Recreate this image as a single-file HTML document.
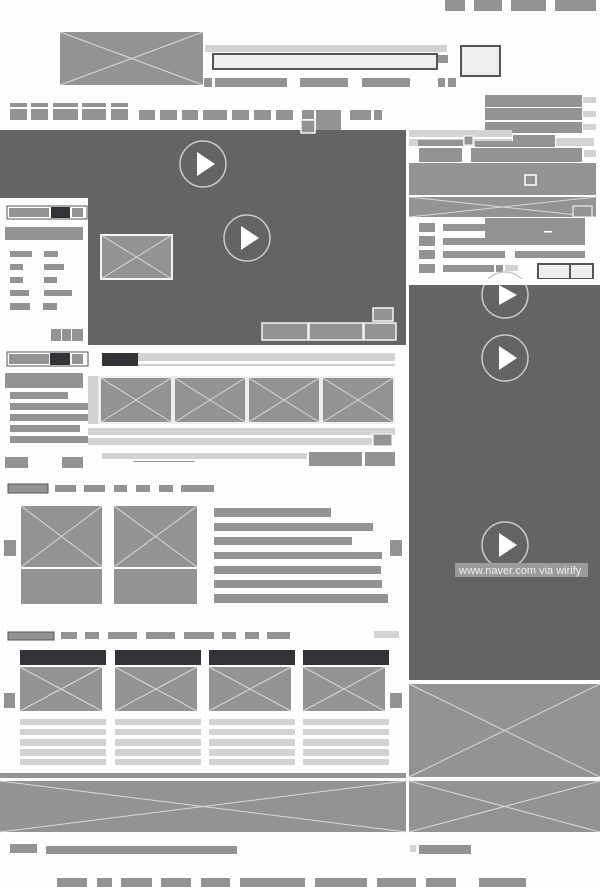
<!DOCTYPE html>
<html><head><meta charset="utf-8"><style>
html,body{margin:0;padding:0;background:#fdfdfd;width:600px;height:887px;overflow:hidden}
svg{display:block}
.g{fill:#939393}.d{fill:#646464}.l{fill:#d2d2d2}.k{fill:#343236}
.x{stroke:#d8d8d8;stroke-width:1;fill:none}
.w{fill:none;stroke:#f4f4f4;stroke-width:2}
</style></head><body>
<svg width="600" height="887" viewBox="0 0 600 887" xmlns="http://www.w3.org/2000/svg">
<!-- top nav -->
<rect class="g" x="445" y="0" width="20" height="11"/><rect class="g" x="474" y="0" width="28" height="11"/><rect class="g" x="511" y="0" width="35" height="11"/><rect class="g" x="555" y="0" width="41" height="11"/>
<!-- logo -->
<rect class="g" x="60" y="32" width="143" height="53"/><path class="x" d="M60 32L203 85M203 32L60 85"/>
<!-- search -->
<rect class="l" x="205" y="45" width="242" height="7"/>
<rect x="213" y="54" width="224" height="15" fill="#eee" stroke="#555" stroke-width="2"/>
<rect class="g" x="438" y="55" width="10" height="8"/>
<rect x="461" y="46" width="39" height="30" fill="#eee" stroke="#555" stroke-width="2"/>
<rect class="g" x="204" y="78" width="8" height="9"/><rect class="g" x="215" y="78" width="72" height="9"/><rect class="g" x="300" y="78" width="48" height="9"/><rect class="g" x="362" y="78" width="48" height="9"/><rect class="g" x="438" y="78" width="7" height="9"/><rect class="g" x="448" y="78" width="8" height="9"/>
<!-- nav row -->
<g class="g"><rect x="10" y="103" width="17" height="4"/><rect x="31" y="103" width="17" height="4"/><rect x="53" y="103" width="25" height="4"/><rect x="82" y="103" width="24" height="4"/><rect x="111" y="103" width="17" height="4"/>
<rect x="10" y="109" width="17" height="11"/><rect x="31" y="109" width="17" height="11"/><rect x="53" y="109" width="25" height="11"/><rect x="82" y="109" width="24" height="11"/><rect x="111" y="109" width="17" height="11"/>
<rect x="139" y="110" width="16" height="10"/><rect x="160" y="110" width="17" height="10"/><rect x="182" y="110" width="16" height="10"/><rect x="203" y="110" width="24" height="10"/><rect x="232" y="110" width="17" height="10"/><rect x="254" y="110" width="17" height="10"/><rect x="276" y="110" width="17" height="10"/>
<rect x="302" y="110" width="12" height="9"/><rect x="316" y="110" width="25" height="20"/><rect x="350" y="110" width="21" height="10"/><rect x="374" y="110" width="8" height="10"/></g>
<!-- right top bars -->
<rect class="g" x="485" y="95" width="97" height="12"/><rect class="g" x="485" y="108" width="97" height="12"/><rect class="g" x="485" y="122" width="97" height="11"/>
<rect class="l" x="583" y="97" width="13" height="6"/><rect class="l" x="583" y="111" width="13" height="6"/><rect class="l" x="583" y="124" width="13" height="6"/>
<!-- main video -->
<rect class="d" x="0" y="130" width="406" height="215"/>
<rect x="301" y="120" width="14" height="13" class="g" stroke="#f4f4f4" stroke-width="1.5"/>
<circle cx="203" cy="164" r="23" fill="none" stroke="#c8c8c8" stroke-width="1.5"/><path d="M197 152L215 164L197 176Z" fill="#fff"/>
<circle cx="247" cy="238" r="23" fill="none" stroke="#c8c8c8" stroke-width="1.5"/><path d="M241 226L259 238L241 250Z" fill="#fff"/>
<rect class="g" x="101" y="235" width="71" height="44" stroke="#f4f4f4" stroke-width="2"/><path class="x" d="M101 235L172 279M172 235L101 279"/>
<rect class="g" x="373" y="308" width="20" height="13" stroke="#f4f4f4" stroke-width="1.5"/>
<rect class="g" x="262" y="323" width="46" height="17" stroke="#f4f4f4" stroke-width="1.5"/><rect class="g" x="309" y="323" width="54" height="17" stroke="#f4f4f4" stroke-width="1.5"/><rect class="g" x="364" y="323" width="32" height="17" stroke="#f4f4f4" stroke-width="1.5"/>
<!-- left panel -->
<rect fill="#fdfdfd" x="0" y="198" width="88" height="147"/>
<rect x="7" y="206" width="80" height="13" fill="#fff" stroke="#555" stroke-width="1"/><rect class="g" x="9" y="208" width="40" height="9"/><rect class="k" x="51" y="207" width="19" height="11"/><rect class="g" x="72" y="208" width="11" height="9"/>
<rect class="g" x="5" y="227" width="78" height="13"/>
<g class="g"><rect x="10" y="251" width="22" height="6"/><rect x="10" y="264" width="13" height="6"/><rect x="10" y="277" width="13" height="6"/><rect x="10" y="290" width="19" height="6"/><rect x="10" y="303" width="20" height="7"/>
<rect x="44" y="251" width="14" height="6"/><rect x="44" y="264" width="20" height="6"/><rect x="44" y="277" width="13" height="6"/><rect x="44" y="290" width="28" height="6"/><rect x="43" y="303" width="14" height="7"/>
<rect x="51" y="329" width="10" height="12"/><rect x="62" y="329" width="9" height="12"/><rect x="72" y="329" width="11" height="12"/></g>
<!-- right column -->
<rect class="l" x="409" y="130" width="103" height="7"/><rect class="l" x="409" y="139" width="103" height="7"/><rect class="g" x="418" y="140" width="45" height="6"/><rect class="g" x="464" y="136" width="9" height="9" stroke="#fff"/>
<rect class="g" x="513" y="135" width="42" height="12"/><rect class="l" x="556" y="138" width="38" height="8"/><rect class="g" x="475" y="141" width="38" height="6"/>
<rect class="g" x="419" y="148" width="43" height="14"/><rect class="g" x="471" y="148" width="111" height="14"/><rect class="l" x="584" y="150" width="12" height="7"/>
<rect class="g" x="409" y="163" width="187" height="32"/><rect x="525" y="175" width="11" height="10" fill="none" stroke="#fff" stroke-width="1.5"/>
<rect class="g" x="409" y="197" width="187" height="20"/><path class="x" d="M409 197L596 217M596 197L409 217"/><rect class="g" x="573" y="206" width="19" height="11" stroke="#fff"/>
<g class="g"><rect x="419" y="223" width="16" height="9"/><rect x="419" y="236" width="16" height="10"/><rect x="419" y="250" width="16" height="9"/><rect x="419" y="264" width="16" height="9"/>
<rect x="443" y="224" width="70" height="7"/><rect x="443" y="238" width="70" height="7"/><rect x="485" y="218" width="100" height="27"/>
<rect x="443" y="251" width="62" height="7"/><rect x="515" y="251" width="70" height="7"/><rect x="443" y="265" width="51" height="7"/><rect x="496" y="265" width="7" height="7"/></g>
<rect class="l" x="505" y="265" width="13" height="6"/><rect fill="#fff" x="544" y="231" width="8" height="1.5"/>
<rect x="538" y="264" width="32" height="15" fill="#eee" stroke="#555" stroke-width="2"/><rect x="570" y="264" width="23" height="15" fill="#eee" stroke="#555" stroke-width="2"/>
<!-- right dark video -->
<rect class="d" x="409" y="285" width="191" height="395"/>
<circle cx="505" cy="295" r="23" fill="none" stroke="#c8c8c8" stroke-width="1.5"/><rect fill="#fdfdfd" x="409" y="279" width="191" height="6"/><path d="M499 285L517 295L499 305Z" fill="#fff"/>
<circle cx="505" cy="358" r="23" fill="none" stroke="#c8c8c8" stroke-width="1.5"/><path d="M499 346L517 358L499 370Z" fill="#fff"/>
<circle cx="505" cy="545" r="23" fill="none" stroke="#c8c8c8" stroke-width="1.5"/><path d="M499 533L517 545L499 557Z" fill="#fff"/>
<rect x="455" y="563" width="133" height="14" fill="#9a9a9a"/>
<text x="459" y="574" font-family="Liberation Sans, sans-serif" font-size="11" fill="#eee">www.naver.com via wirify</text>
<!-- section 2 -->
<rect x="7" y="352" width="81" height="14" fill="#fff" stroke="#555"/><rect class="g" x="9" y="354" width="40" height="10"/><rect class="k" x="50" y="353" width="20" height="12"/><rect class="g" x="72" y="354" width="11" height="10"/>
<rect class="k" x="102" y="353" width="36" height="13"/><rect class="l" x="138" y="353" width="257" height="8"/><rect class="l" x="138" y="364" width="257" height="2"/>
<rect class="g" x="5" y="373" width="78" height="15"/>
<g class="g"><rect x="10" y="392" width="58" height="7"/><rect x="10" y="403" width="78" height="7"/><rect x="10" y="414" width="78" height="7"/><rect x="10" y="425" width="70" height="7"/><rect x="10" y="436" width="78" height="7"/></g>
<rect class="l" x="88" y="376" width="10" height="48"/>
<rect fill="#eee" x="98" y="376" width="297" height="48"/>
<rect class="g" x="101" y="378" width="70" height="44"/><path class="x" d="M101 378L171 422M171 378L101 422"/>
<rect class="g" x="175" y="378" width="70" height="44"/><path class="x" d="M175 378L245 422M245 378L175 422"/>
<rect class="g" x="249" y="378" width="70" height="44"/><path class="x" d="M249 378L319 422M319 378L249 422"/>
<rect class="g" x="323" y="378" width="70" height="44"/><path class="x" d="M323 378L393 422M393 378L323 422"/>
<rect class="l" x="88" y="428" width="307" height="7"/><rect class="l" x="88" y="438" width="284" height="7"/><rect class="g" x="373" y="434" width="19" height="12" stroke="#fff"/>
<rect class="g" x="5" y="457" width="23" height="11"/><rect class="g" x="62" y="457" width="21" height="11"/>
<rect class="l" x="102" y="453" width="205" height="6"/><rect fill="#999" x="133" y="461" width="62" height="1"/>
<rect class="g" x="309" y="452" width="53" height="14"/><rect class="g" x="365" y="452" width="30" height="14"/>
<!-- tabs 1 -->
<rect x="8" y="484" width="40" height="9" class="g" stroke="#555" stroke-width="1"/>
<g class="g"><rect x="55" y="485" width="21" height="7"/><rect x="84" y="485" width="21" height="7"/><rect x="114" y="485" width="13" height="7"/><rect x="136" y="485" width="14" height="7"/><rect x="159" y="485" width="14" height="7"/><rect x="181" y="485" width="33" height="7"/></g>
<rect class="g" x="21" y="506" width="81" height="61"/><path class="x" d="M21 506L102 567M102 506L21 567"/><rect class="g" x="21" y="569" width="81" height="35"/>
<rect class="g" x="114" y="506" width="83" height="61"/><path class="x" d="M114 506L197 567M197 506L114 567"/><rect class="g" x="114" y="569" width="83" height="35"/>
<g class="g"><rect x="214" y="508" width="117" height="9"/><rect x="214" y="523" width="159" height="8"/><rect x="214" y="537" width="138" height="8"/><rect x="214" y="552" width="168" height="7"/><rect x="214" y="566" width="167" height="8"/><rect x="214" y="580" width="168" height="8"/><rect x="214" y="594" width="174" height="9"/>
<rect x="4" y="540" width="12" height="16"/><rect x="390" y="540" width="12" height="16"/></g>
<!-- tabs 2 -->
<rect x="8" y="632" width="46" height="8" class="g" stroke="#555"/>
<g class="g"><rect x="61" y="632" width="16" height="7"/><rect x="85" y="632" width="14" height="7"/><rect x="108" y="632" width="29" height="7"/><rect x="146" y="632" width="29" height="7"/><rect x="184" y="632" width="30" height="7"/><rect x="222" y="632" width="14" height="7"/><rect x="245" y="632" width="14" height="7"/><rect x="267" y="632" width="23" height="7"/></g>
<rect class="l" x="374" y="631" width="25" height="7"/>
<g id="c1">
<rect class="k" x="20" y="650" width="86" height="15"/><rect class="g" x="20" y="667" width="82" height="44"/><path class="x" d="M20 667L102 711M102 667L20 711"/>
<rect class="l" x="20" y="719" width="86" height="6"/><rect class="l" x="20" y="729" width="86" height="6"/><rect class="l" x="20" y="739" width="86" height="7"/><rect class="l" x="20" y="749" width="86" height="7"/><rect class="l" x="20" y="759" width="86" height="6"/>
</g>
<use href="#c1" x="95"/><use href="#c1" x="189"/><use href="#c1" x="283"/>
<rect class="g" x="4" y="693" width="11" height="15"/><rect class="g" x="390" y="693" width="12" height="15"/>
<!-- bottom banners -->
<rect class="g" x="409" y="684" width="191" height="93"/><path class="x" d="M409 684L600 777M600 684L409 777"/>
<rect class="g" x="0" y="773" width="406" height="5"/>
<rect class="g" x="0" y="781" width="406" height="51"/><path class="x" d="M0 781L406 832M406 781L0 832"/>
<rect class="g" x="409" y="781" width="191" height="51"/><path class="x" d="M409 781L600 832M600 781L409 832"/>
<!-- footer -->
<rect class="g" x="10" y="844" width="27" height="9"/><rect class="g" x="46" y="846" width="191" height="8"/>
<rect class="l" x="410" y="845" width="6" height="7"/><rect class="g" x="419" y="845" width="52" height="9"/>
<g class="g"><rect x="57" y="878" width="30" height="9"/><rect x="97" y="878" width="15" height="9"/><rect x="121" y="878" width="31" height="9"/><rect x="161" y="878" width="30" height="9"/><rect x="201" y="878" width="29" height="9"/><rect x="240" y="878" width="65" height="9"/><rect x="315" y="878" width="52" height="9"/><rect x="377" y="878" width="39" height="9"/><rect x="426" y="878" width="30" height="9"/><rect x="479" y="878" width="47" height="9"/></g>
</svg>
</body></html>
